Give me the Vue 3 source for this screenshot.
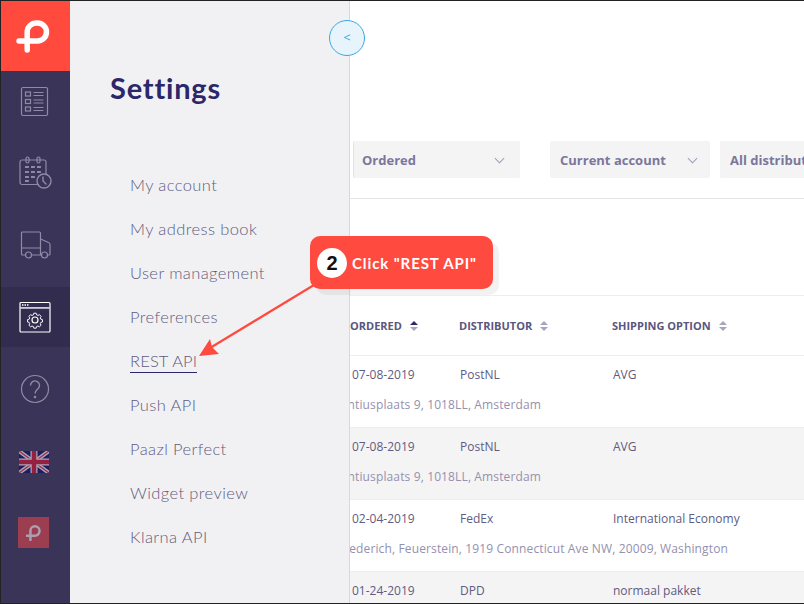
<script setup>
const menu = ['My account', 'My address book', 'User management', 'Preferences', 'REST API', 'Push API', 'Paazl Perfect', 'Widget preview', 'Klarna API']
const rows = [
  { date: '07-08-2019', dist: 'PostNL', ship: 'AVG', addr: 'Laurentiusplaats 9, 1018LL, Amsterdam', w: 191 },
  { date: '07-08-2019', dist: 'PostNL', ship: 'AVG', addr: 'Laurentiusplaats 9, 1018LL, Amsterdam', w: 191 },
  { date: '02-04-2019', dist: 'FedEx', ship: 'International Economy', addr: 'Frederich, Feuerstein, 1919 Connecticut Ave NW, 20009, Washington', w: 378 },
  { date: '01-24-2019', dist: 'DPD', ship: 'normaal pakket', addr: '', w: 0 },
]
</script>

<template>
  <div class="frame">
    <nav class="rail">
      <div class="logo">
        <svg width="40" height="40" viewBox="15.500 16 40 40" fill="none" stroke="#fff" stroke-width="5.500" stroke-linecap="round" stroke-linejoin="round">
          <path d="M18.500 41H37a9 9 0 0 0 0-18h-1a9.300 9 0 0 0-9.300 9V50" />
        </svg>
      </div>
      <div class="rail-item">
        <svg width="30" height="32" viewBox="0 0 30 32" fill="none" stroke="#8f8ba6" stroke-width="1.200">
          <rect x="1.500" y="2.500" width="26" height="28" rx="1.500" />
          <rect x="5.500" y="7" width="5" height="4" /><rect x="5.500" y="14.500" width="5" height="4" /><rect x="5.500" y="22" width="5" height="4" />
          <path d="M13.500 7.500h10M13.500 10.500h10M13.500 15h10M13.500 18h10M13.500 22.500h10M13.500 25.500h10" />
        </svg>
      </div>
      <div class="rail-item">
        <svg width="34" height="34" viewBox="0 0 34 34" fill="none" stroke="#8f8ba6" stroke-width="1.200">
          <path d="M21 28.500H4a2 2 0 0 1-2-2V6a2 2 0 0 1 2-2h22a2 2 0 0 1 2 2v12" />
          <rect x="8" y="1" width="3" height="6" rx="1.500" /><rect x="19" y="1" width="3" height="6" rx="1.500" />
          <path stroke-width="1.800" d="M7 11h3v1M13 11h3v1M19 11h3v1M7 16h3v1M13 16h3v1M19 16h3v1M7 21h3v1M13 21h3v1M7 25h3v1" />
          <circle cx="26" cy="25" r="7" stroke-width="1.400" />
          <path d="M25 20.500V25l3.500 3.500" stroke-width="1.400" />
        </svg>
      </div>
      <div class="rail-item">
        <svg width="32" height="28" viewBox="0 0 32 28" fill="none" stroke="#8f8ba6" stroke-width="1.200">
          <path d="M2.500 17V2a1 1 0 0 1 1-1h17a1 1 0 0 1 1 1v22H13M6.500 24H3.500a1 1 0 0 1-1-1v-6h19" />
          <path d="M21.500 8l8 3.500a2 2 0 0 1 1.500 2V23a1 1 0 0 1-1 1h-1.500M22.500 24h-1" />
          <circle cx="9.500" cy="24" r="3" /><circle cx="25.500" cy="24" r="3" />
        </svg>
      </div>
      <div class="rail-item active">
        <svg width="32" height="32" viewBox="0 0 32 32" fill="none" stroke="#fff">
          <rect x="1" y="1.500" width="30" height="29.500" rx="1" stroke-width="1.200" />
          <rect x="1" y="6" width="30" height="1.800" fill="#cfcdd9" stroke="none" />
          <path d="M3 4h1.500M5.500 4H7M8 4h1.500" stroke-width="1.500" />
          <circle cx="16" cy="19" r="3" stroke-width="1.200" />
          <path stroke-width="1.200" stroke-linejoin="round" d="M14.500 10.500h3l.5 2 1.700.8 1.900-1 2 2.200-1 1.800.7 1.700 2 .5v3l-2 .5-.7 1.700 1 1.800-2.100 2-1.800-1-1.700.7-.5 2h-3l-.5-2-1.700-.7-1.800 1-2.100-2 1-1.800-.7-1.700-2-.5v-3l2-.5.7-1.700-1-1.800 2-2.200 1.900 1 1.700-.8z" transform="translate(16 19) scale(.8) translate(-16 -19)" />
        </svg>
      </div>
      <div class="rail-item">
        <svg width="30" height="30" viewBox="0 0 30 30" fill="none" stroke="#8f8ba6" stroke-width="1.200">
          <circle cx="15" cy="15" r="13.500" />
          <path stroke-width="1.400" d="M10.500 11.500a4.500 4.500 0 1 1 7.500 3.300c-1.600 1.400-3 2-3 4.700" />
          <circle cx="15" cy="23" r=".7" />
        </svg>
      </div>
      <div class="rail-item">
        <svg class="flag" width="30" height="22" viewBox="0 0 30 22">
          <rect width="30" height="22" fill="#1e1c63" />
          <path d="M0 0L30 22M30 0L0 22" stroke="#a8a6b5" stroke-width="4" />
          <path d="M0 0L30 22M30 0L0 22" stroke="#9c2a4a" stroke-width="1.200" />
          <path d="M15 0V22M0 11H30" stroke="#a8a6b5" stroke-width="7" />
          <path d="M15 0V22M0 11H30" stroke="#96203f" stroke-width="4.500" />
        </svg>
      </div>
      <div class="avatar">
        <svg width="16" height="16" viewBox="0 0 36 36" fill="none" stroke="#ad9fb3" stroke-width="5.500" stroke-linecap="round">
          <path d="M1.500 24H20a10.500 10.500 0 0 0 0-21 10 10 0 0 0-10 10V34" />
        </svg>
      </div>
    </nav>

    <aside class="panel">
      <h1 class="title">Settings</h1>
      <ul class="menu">
        <li v-for="m in menu" :key="m"><span :class="{ current: m === 'REST API' }">{{ m }}</span></li>
      </ul>
    </aside>

    <main class="main">
      <div class="filters">
        <div class="select s1"><span>Ordered</span><i class="chev"></i></div>
        <div class="select s2"><span>Current account</span><i class="chev"></i></div>
        <div class="select s3"><span>All distributors</span></div>
      </div>
      <div class="thead">
        <div class="c1">Ordered<span class="sort"><b class="up dark"></b><b class="down"></b></span></div>
        <div class="c2">Distributor<span class="sort"><b class="up"></b><b class="down"></b></span></div>
        <div class="c3">Shipping option<span class="sort"><b class="up"></b><b class="down"></b></span></div>
      </div>
      <div v-for="(r, i) in rows" :key="i" class="row" :class="{ alt: i % 2 === 1 }">
        <div class="cells">
          <div class="c1">{{ r.date }}</div>
          <div class="c2">{{ r.dist }}</div>
          <div class="c3">{{ r.ship }}</div>
        </div>
        <div v-if="r.addr" class="addr" :style="{ width: r.w + 'px' }"><span>{{ r.addr }}</span></div>
      </div>
    </main>

    <button class="toggle">&lt;</button>

    <svg class="arrow" width="804" height="604" viewBox="0 0 804 604" fill="none">
      <path d="M314 285L210 348" stroke="#ff4a40" stroke-width="2.200" />
      <path d="M199 356L210 339L212 347L219 354z" fill="#ff4a40" />
    </svg>
    <div class="callout">
      <span class="num">2</span>
      <span class="label">Click "REST API"</span>
    </div>
  </div>
</template>

<style>
html, body { margin: 0; background: #fff; }
</style>

<style scoped>
.frame {
  position: relative;
  width: 804px;
  height: 604px;
  box-sizing: border-box;
  border-top: 1px solid #222;
  border-left: 1px solid #222;
  border-bottom: 1px solid #222;
  display: flex;
  overflow: hidden;
  font-family: "Open Sans", sans-serif;
}
.rail { width: 69px; flex: none; background: #3a3558; display: flex; flex-direction: column; }
.logo { height: 70px; flex: none; background: #ff4a3d; display: flex; align-items: center; justify-content: center; }
.rail-item { height: 60px; flex: none; margin-bottom: 12px; padding-right: 2px; box-sizing: border-box; display: flex; align-items: center; justify-content: center; }
.rail-item.active { background: #322d4e; }
.flag { margin: 2px 1px 0 0; }
.avatar { width: 31px; height: 31px; margin: 14px 0 0 17px; flex: none; background: #9c3d50; display: flex; align-items: center; justify-content: center; }

.panel {
  width: 280px;
  flex: none;
  box-sizing: border-box;
  background: #f1f1f4;
  border-right: 1px solid #d8d8db;
  padding: 69px 0 0 40px;
  font-family: Lato, sans-serif;
}
.title { margin: 0 0 57px; font-size: 29px; line-height: 36px; font-weight: 700; color: #2c2768; letter-spacing: .8px; }
.menu { list-style: none; margin: 0; padding: 0 0 0 20px; }
.menu li { height: 44px; line-height: 44px; font-size: 16.500px; font-weight: 300; color: #5f5b7c; letter-spacing: .4px; }
.current { display: inline-block; line-height: 22px; letter-spacing: .15px; border-bottom: 1px solid #2c2768; }

.main { flex: 1; min-width: 0; overflow: hidden; }
.filters { margin-top: 140px; padding: 0 0 20px 3px; display: flex; border-bottom: 1px solid #e5e5e7; }
.select {
  flex: none;
  height: 37px;
  box-sizing: border-box;
  background: #f4f4f4;
  border-radius: 2px;
  display: flex;
  align-items: center;
  justify-content: space-between;
  font-size: 13px;
  font-weight: 700;
  color: #7b779c;
}
.s1 { width: 167px; padding: 0 17px 0 8px; margin-right: 30px; border-left: 1px solid #e3e3e5; }
.s2 { width: 160px; padding: 0 14px 0 10px; margin-right: 10px; }
.s3 { width: 120px; padding: 0 0 0 10px; white-space: nowrap; }
.chev { width: 6px; height: 6px; margin-top: -3px; border-right: 1.200px solid #a09db5; border-bottom: 1.200px solid #a09db5; transform: rotate(45deg); }

.thead, .cells { display: flex; }
.thead {
  height: 59px;
  margin-top: 96px;
  border-top: 1px solid #eeeef0;
  border-bottom: 1px solid #eeeef0;
  align-items: center;
  font-size: 11px;
  font-weight: 700;
  text-transform: uppercase;
  color: #5a5680;
}
.c1, .c2, .c3 { flex: none; white-space: nowrap; }
.thead .c1, .thead .c2, .thead .c3 { display: flex; align-items: center; }
.thead .c1 { width: 109px; }
.thead .c2 { width: 153px; }
.cells .c1 { width: 110px; padding-left: 2px; box-sizing: border-box; }
.cells .c2 { width: 153px; }
.sort { display: inline-flex; flex-direction: column; gap: 2px; margin-left: 8px; }
.sort b { display: block; width: 0; height: 0; border-left: 4px solid transparent; border-right: 4px solid transparent; }
.up { border-bottom: 4px solid #a7a5bd; }
.down { border-top: 4px solid #a7a5bd; }
.up.dark { border-bottom-color: #2c2768; }

.row { height: 71px; border-bottom: 1px solid #eeeef0; font-size: 12px; color: #5f5b82; }
.row.alt { background: #f4f4f4; }
.cells { height: 36px; align-items: center; }
.addr { display: flex; justify-content: flex-end; overflow: hidden; white-space: nowrap; margin-top: 3px; color: #9491ae; line-height: 20px; letter-spacing: .13px; }

.toggle {
  position: absolute;
  left: 328px;
  top: 19px;
  width: 36px;
  height: 36px;
  box-sizing: border-box;
  padding: 0 0 2px;
  border: 1px solid #3aa9dc;
  border-radius: 50%;
  background: #e8f4fb;
  color: #3aa9dc;
  font: 13px "Open Sans", sans-serif;
}
.arrow { position: absolute; left: -1px; top: -1px; pointer-events: none; }
.callout {
  position: absolute;
  left: 309px;
  top: 235px;
  width: 183px;
  height: 53px;
  box-sizing: border-box;
  padding-left: 7px;
  border-radius: 10px;
  background: #ff4a40;
  box-shadow: 6px 6px 0 rgba(0, 0, 0, .05);
  display: flex;
  align-items: center;
  gap: 5px;
  color: #fff;
  font-family: Lato, sans-serif;
}
.num {
  width: 30px;
  height: 30px;
  border-radius: 50%;
  background: #fff;
  color: #111;
  font: 700 20px/30px "Liberation Sans", sans-serif;
  text-align: center;
}
.label { font-size: 15px; font-weight: 700; letter-spacing: .9px; white-space: nowrap; }
</style>
